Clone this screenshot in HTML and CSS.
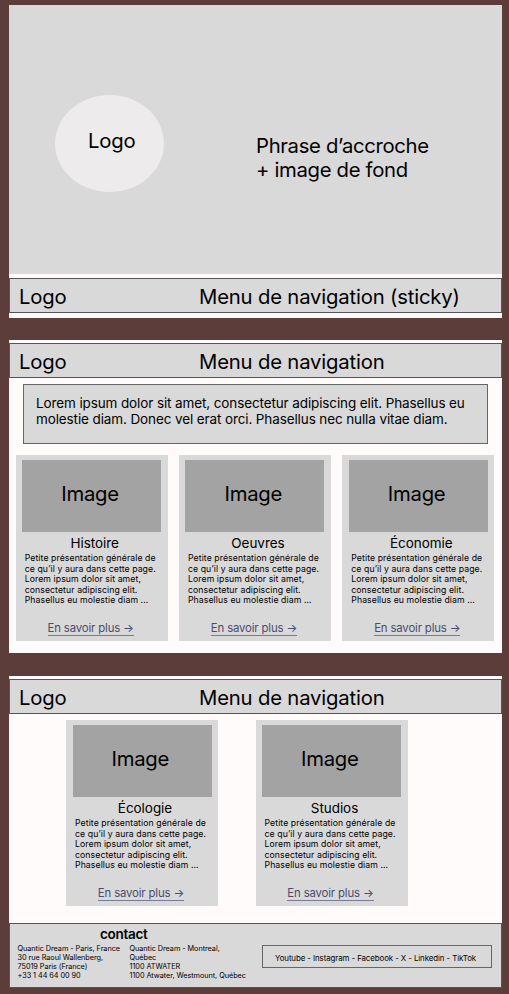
FILE: index.html
```
<!DOCTYPE html>
<html lang="fr">
<head>
<meta charset="utf-8">
<title>Maquette</title>
<link rel="stylesheet" href="styles.css">
</head>
<body>
<section class="frame frame-home">
  <div class="hero">
    <div class="hero-logo">Logo</div>
    <p class="hero-text">Phrase d’accroche<br>+ image de fond</p>
  </div>
  <nav class="nav"><span class="brand">Logo</span><span>Menu de navigation (sticky)</span></nav>
</section>

<section class="frame frame-list">
  <nav class="nav"><span class="brand">Logo</span><span>Menu de navigation</span></nav>
  <p class="intro">Lorem ipsum dolor sit amet, consectetur adipiscing elit. Phasellus eu<br>molestie diam. Donec vel erat orci. Phasellus nec nulla vitae diam.</p>
  <div class="cards">
    <article class="card">
      <div class="thumb">Image</div>
      <h2>Histoire</h2>
      <p>Petite présentation générale de<br>ce qu’il y aura dans cette page.<br>Lorem ipsum dolor sit amet,<br>consectetur adipiscing elit.<br>Phasellus eu molestie diam ...</p>
      <a>En savoir plus →</a>
    </article>
    <article class="card">
      <div class="thumb">Image</div>
      <h2>Oeuvres</h2>
      <p>Petite présentation générale de<br>ce qu’il y aura dans cette page.<br>Lorem ipsum dolor sit amet,<br>consectetur adipiscing elit.<br>Phasellus eu molestie diam ...</p>
      <a>En savoir plus →</a>
    </article>
    <article class="card">
      <div class="thumb">Image</div>
      <h2>Économie</h2>
      <p>Petite présentation générale de<br>ce qu’il y aura dans cette page.<br>Lorem ipsum dolor sit amet,<br>consectetur adipiscing elit.<br>Phasellus eu molestie diam ...</p>
      <a>En savoir plus →</a>
    </article>
  </div>
</section>

<section class="frame frame-end">
  <nav class="nav"><span class="brand">Logo</span><span>Menu de navigation</span></nav>
  <div class="cards cards-pair">
    <article class="card">
      <div class="thumb">Image</div>
      <h2>Écologie</h2>
      <p>Petite présentation générale de<br>ce qu’il y aura dans cette page.<br>Lorem ipsum dolor sit amet,<br>consectetur adipiscing elit.<br>Phasellus eu molestie diam ...</p>
      <a>En savoir plus →</a>
    </article>
    <article class="card">
      <div class="thumb">Image</div>
      <h2>Studios</h2>
      <p>Petite présentation générale de<br>ce qu’il y aura dans cette page.<br>Lorem ipsum dolor sit amet,<br>consectetur adipiscing elit.<br>Phasellus eu molestie diam ...</p>
      <a>En savoir plus →</a>
    </article>
  </div>
  <footer class="footer">
    <div class="contact">
      <h3>contact</h3>
      <div class="addresses">
        <address>Quantic Dream - Paris, France<br>30 rue Raoul Wallenberg,<br>75019 Paris (France)<br>+33 1 44 64 00 90</address>
        <address>Quantic Dream - Montreal,<br>Québec<br>1100 ATWATER<br>1100 Atwater, Westmount, Québec</address>
      </div>
    </div>
    <div class="social">Youtube - Instagram - Facebook - X - Linkedin - TikTok</div>
  </footer>
</section>
</body>
</html>
```
FILE: styles.css
```
* { box-sizing: border-box; margin: 0; padding: 0; }

body {
  height: 994px;
  padding: 5px 7px 0 9px;
  overflow: hidden;
  background: #5c3d3a;
  color: #000;
  font-family: Inter, "Liberation Sans", sans-serif;
  white-space: nowrap;
}

.frame { width: 493px; background: #fffbfa; overflow: hidden; }
.frame-home { height: 312.5px; margin-bottom: 22.5px; }
.frame-list { height: 313px; margin-bottom: 22.5px; padding-top: 3px; }
.frame-end { height: 312.5px; padding-top: 3.5px; }

.hero {
  display: flex;
  align-items: flex-start;
  height: 268.5px;
  margin-bottom: 4.5px;
  padding-left: 46px;
  background: #d9d9d9;
}
.hero-logo {
  width: 109px;
  height: 97.5px;
  margin-top: 89.5px;
  padding: 34px 0 0 33px;
  border-radius: 50%;
  background: #edebec;
  font-size: 20.3px;
  line-height: 24.5px;
  letter-spacing: -0.2px;
}
.hero-text {
  margin: 128.5px 0 0 92px;
  font-size: 20.3px;
  line-height: 24.5px;
  letter-spacing: -0.32px;
}

.nav {
  display: flex;
  align-items: center;
  height: 35px;
  padding: 3px 0 0 9px;
  border: 1px solid #555;
  background: #d9d9d9;
  font-size: 20.3px;
  line-height: 24.5px;
  letter-spacing: -0.18px;
}
.brand { width: 180px; }

.intro {
  width: 465px;
  height: 60px;
  margin: 6px 0 0 14px;
  padding: 10px 0 0 12px;
  border: 1px solid #666;
  background: #d9d9d9;
  font-size: 13.5px;
  line-height: 16.3px;
  letter-spacing: -0.115px;
}

.cards { display: flex; gap: 11.3px; margin: 11px 0 0 6.7px; }
.cards-pair { gap: 37.5px; margin: 6px 0 0 57px; }

.card {
  display: flex;
  flex-direction: column;
  align-items: center;
  width: 152px;
  height: 185.5px;
  padding-top: 4.5px;
  background: #d9d9d9;
}
.thumb {
  width: 139px;
  height: 72.5px;
  padding: 22px 0 0 39px;
  background: #a3a3a3;
  font-size: 20.3px;
  line-height: 24.5px;
  letter-spacing: -0.25px;
}
.card h2 {
  margin: 3px 0 0 6px;
  font-size: 13.5px;
  font-weight: 400;
  line-height: 16.5px;
  letter-spacing: -0.05px;
}
.card p {
  align-self: flex-start;
  margin: 1.5px 0 0 9px;
  font-size: 8.7px;
  line-height: 10.55px;
  letter-spacing: 0.085px;
}
.card a {
  margin: 16.5px 0 0 -2px;
  border-bottom: 1px solid #777b95;
  color: #4a4c70;
  font-size: 11.4px;
  line-height: 13px;
  letter-spacing: -0.16px;
}

.footer {
  display: flex;
  height: 65px;
  margin-top: 17.5px;
  padding-left: 7.5px;
  border: 1px solid #555;
  background: #d9d9d9;
}
.contact { width: 244.5px; }
.contact h3 {
  padding-left: 82.5px;
  margin-top: 2px;
  font-size: 13.5px;
  font-weight: 600;
  line-height: 16.5px;
  letter-spacing: -0.28px;
}
.addresses { display: flex; margin-top: 2.5px; }
address {
  width: 112px;
  font-size: 7.3px;
  font-style: normal;
  line-height: 8.9px;
  letter-spacing: -0.05px;
}
.social {
  width: 230px;
  height: 23px;
  margin-top: 21px;
  padding: 7px 0 0 12px;
  border: 1px solid #666;
  font-size: 7.9px;
  line-height: 10px;
  letter-spacing: -0.09px;
}
```
